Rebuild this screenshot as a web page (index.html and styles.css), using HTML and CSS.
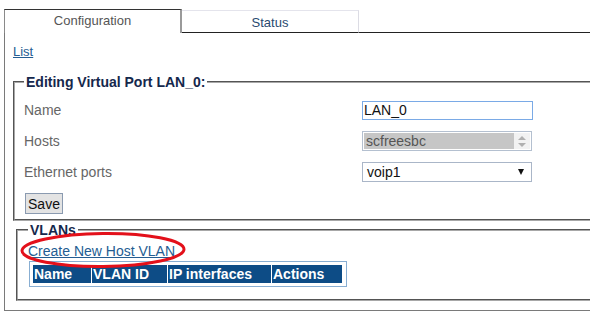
FILE: index.html
```html
<!DOCTYPE html>
<html>
  <head>
    <title>Virtual Port</title>
    <link rel="stylesheet" href="styles.css">
  </head>

  <body>
    <div class="page">
      <div class="tabs">
        <div class="tab active">Configuration</div>
        <div class="tab">Status</div>
        <div class="tab-fill"></div>
      </div>
      <div class="panel">
        <a href="#" class="list-link">List</a>

        <fieldset class="edit">
          <legend>Editing Virtual Port LAN_0:</legend>
          <div class="row">
            <label>Name</label>
            <input type="text" class="field name-input" value="LAN_0" />
          </div>
          <div class="row">
            <label>Hosts</label>
            <div class="field listbox">
              <span class="option">scfreesbc</span>
              <span class="spin">
                <span class="up"></span>
                <span class="down"></span>
              </span>
            </div>
          </div>
          <div class="row">
            <label>Ethernet ports</label>
            <div class="field dropdown">
              <span>voip1</span>
              <span class="caret"></span>
            </div>
          </div>
          <button type="submit" class="save">Save</button>
        </fieldset>

        <fieldset class="vlans">
          <legend>VLANs</legend>
          <a href="#" class="create-link">Create New Host VLAN</a>
          <div class="grid-wrap">
            <table class="grid">
              <thead>
                <tr>
                  <th class="c-name">Name</th>
                  <th class="c-id">VLAN ID</th>
                  <th class="c-ip">IP interfaces</th>
                  <th class="c-act">Actions</th>
                </tr>
              </thead>
            </table>
          </div>
        </fieldset>
      </div>
    </div>

    <!-- annotation drawn over the link -->
    <svg class="mark" width="170" height="40" viewBox="0 0 170 40">
      <ellipse cx="85" cy="20" rx="81" ry="16.5" fill="none" stroke="#e3101a" stroke-width="3" transform="rotate(-0.6 85 20)" />
    </svg>
  </body>
</html>
```

FILE: styles.css
```css
body {
  margin: 0;
  font-family: "Liberation Sans", Arial, sans-serif;
  font-size: 14px;
  background: white;
}
.page {
  padding: 9px 0 0 4px;
}

/* tabs */
.tabs {
  display: flex;
  height: 24px;
}
.tab {
  box-sizing: border-box;
  font-size: 13px;
  text-align: center;
  line-height: 22px;
}
.tab.active {
  width: 178px;
  height: 24px;
  border-top: 1px solid #333;
  border-left: 1px solid #8a8a8a;
  border-right: 2px solid #9a9a9a;
  color: #555;
}
.tab:not(.active) {
  width: 177px;
  margin-top: 1px;
  height: 23px;
  border-top: 1px solid #e4e4ec;
  border-right: 1px solid #dcdce4;
  border-bottom: 1px solid #222;
  color: #2a4a70;
  line-height: 23px;
}
.tab-fill {
  flex: 1;
  border-bottom: 1px solid #222;
}

/* panel */
.panel {
  border-left: 1px solid #7a7a7a;
  border-bottom: 1px solid #7a7a7a;
  padding: 11px 0 9px 8px;
}
a {
  color: #245d92;
}
.list-link {
  display: block;
  font-size: 13px;
  line-height: 15px;
}

fieldset {
  margin: 0;
  border: 2px groove #a8a8a8;
  border-right: 0;
  min-width: 0;
}
legend {
  padding: 0 2px;
  font-weight: bold;
  font-size: 14px;
  line-height: 16px;
  color: #15284c;
}
.edit {
  margin-top: 15px;
  padding: 10px 0 5px 9px;
}
.vlans {
  margin: 1px 0 0 3px;
  padding: 5px 0 9px 10px;
}

/* form rows */
.row {
  display: grid;
  grid-template-columns: 338px 171px;
  align-items: center;
  height: 20px;
  margin-bottom: 11px;
}
.row label {
  color: #666;
}
.field {
  box-sizing: border-box;
  font-family: "Liberation Sans", Arial, sans-serif;
  font-size: 14px;
  background: white;
}
.name-input {
  width: 171px;
  height: 19px;
  margin: 0;
  padding: 0 1px;
  border: 1px solid #7aaae6;
  outline: none;
  color: #111;
}
.listbox {
  width: 170px;
  height: 20px;
  border: 1px solid #b4c0d0;
  display: flex;
  padding: 1px;
}
.listbox .option {
  flex: 1;
  background: #c6c6c6;
  color: #555;
  line-height: 17px;
  padding-left: 2px;
}
.spin {
  width: 16px;
  background: #f2f2f2;
  display: flex;
  flex-direction: column;
  align-items: center;
  justify-content: center;
  gap: 3px;
}
.spin .up {
  border-left: 4px solid transparent;
  border-right: 4px solid transparent;
  border-bottom: 4px solid #b0b0b0;
}
.spin .down {
  border-left: 4px solid transparent;
  border-right: 4px solid transparent;
  border-top: 4px solid #b0b0b0;
}
.dropdown {
  width: 170px;
  height: 20px;
  border: 1px solid #aab6c8;
  display: flex;
  align-items: center;
  justify-content: space-between;
  padding: 0 7px 0 4px;
  color: #111;
}
.caret {
  border-left: 3.5px solid transparent;
  border-right: 3.5px solid transparent;
  border-top: 6px solid #111;
}
.save {
  display: block;
  margin: 0 0 0 1px;
  height: 21px;
  width: 38px;
  padding: 0;
  font-family: "Liberation Sans", Arial, sans-serif;
  font-size: 14px;
  color: #111;
  background: #e3e3e3;
  border: 1px solid #8a9ab0;
  border-radius: 0;
}

/* vlan table */
.create-link {
  display: block;
  font-size: 14px;
  line-height: 16px;
}
.grid-wrap {
  display: inline-block;
  margin: 2px 0 0 1px;
  border: 1px solid #88aed2;
  padding: 3px 4px 3px 3px;
}
.grid {
  border-collapse: separate;
  border-spacing: 1px 0;
  margin: 0 -1px;
}
.grid th {
  background: #0d4c86;
  color: white;
  font-size: 14px;
  font-weight: bold;
  text-align: left;
  height: 18px;
  padding: 0 0 0 1px;
  line-height: 18px;
}
.c-name {
  width: 57px;
}
.c-id {
  width: 74px;
}
.c-ip {
  width: 102px;
}
.c-act {
  width: 69px;
}

.mark {
  position: absolute;
  left: 18px;
  top: 230px;
}
```
